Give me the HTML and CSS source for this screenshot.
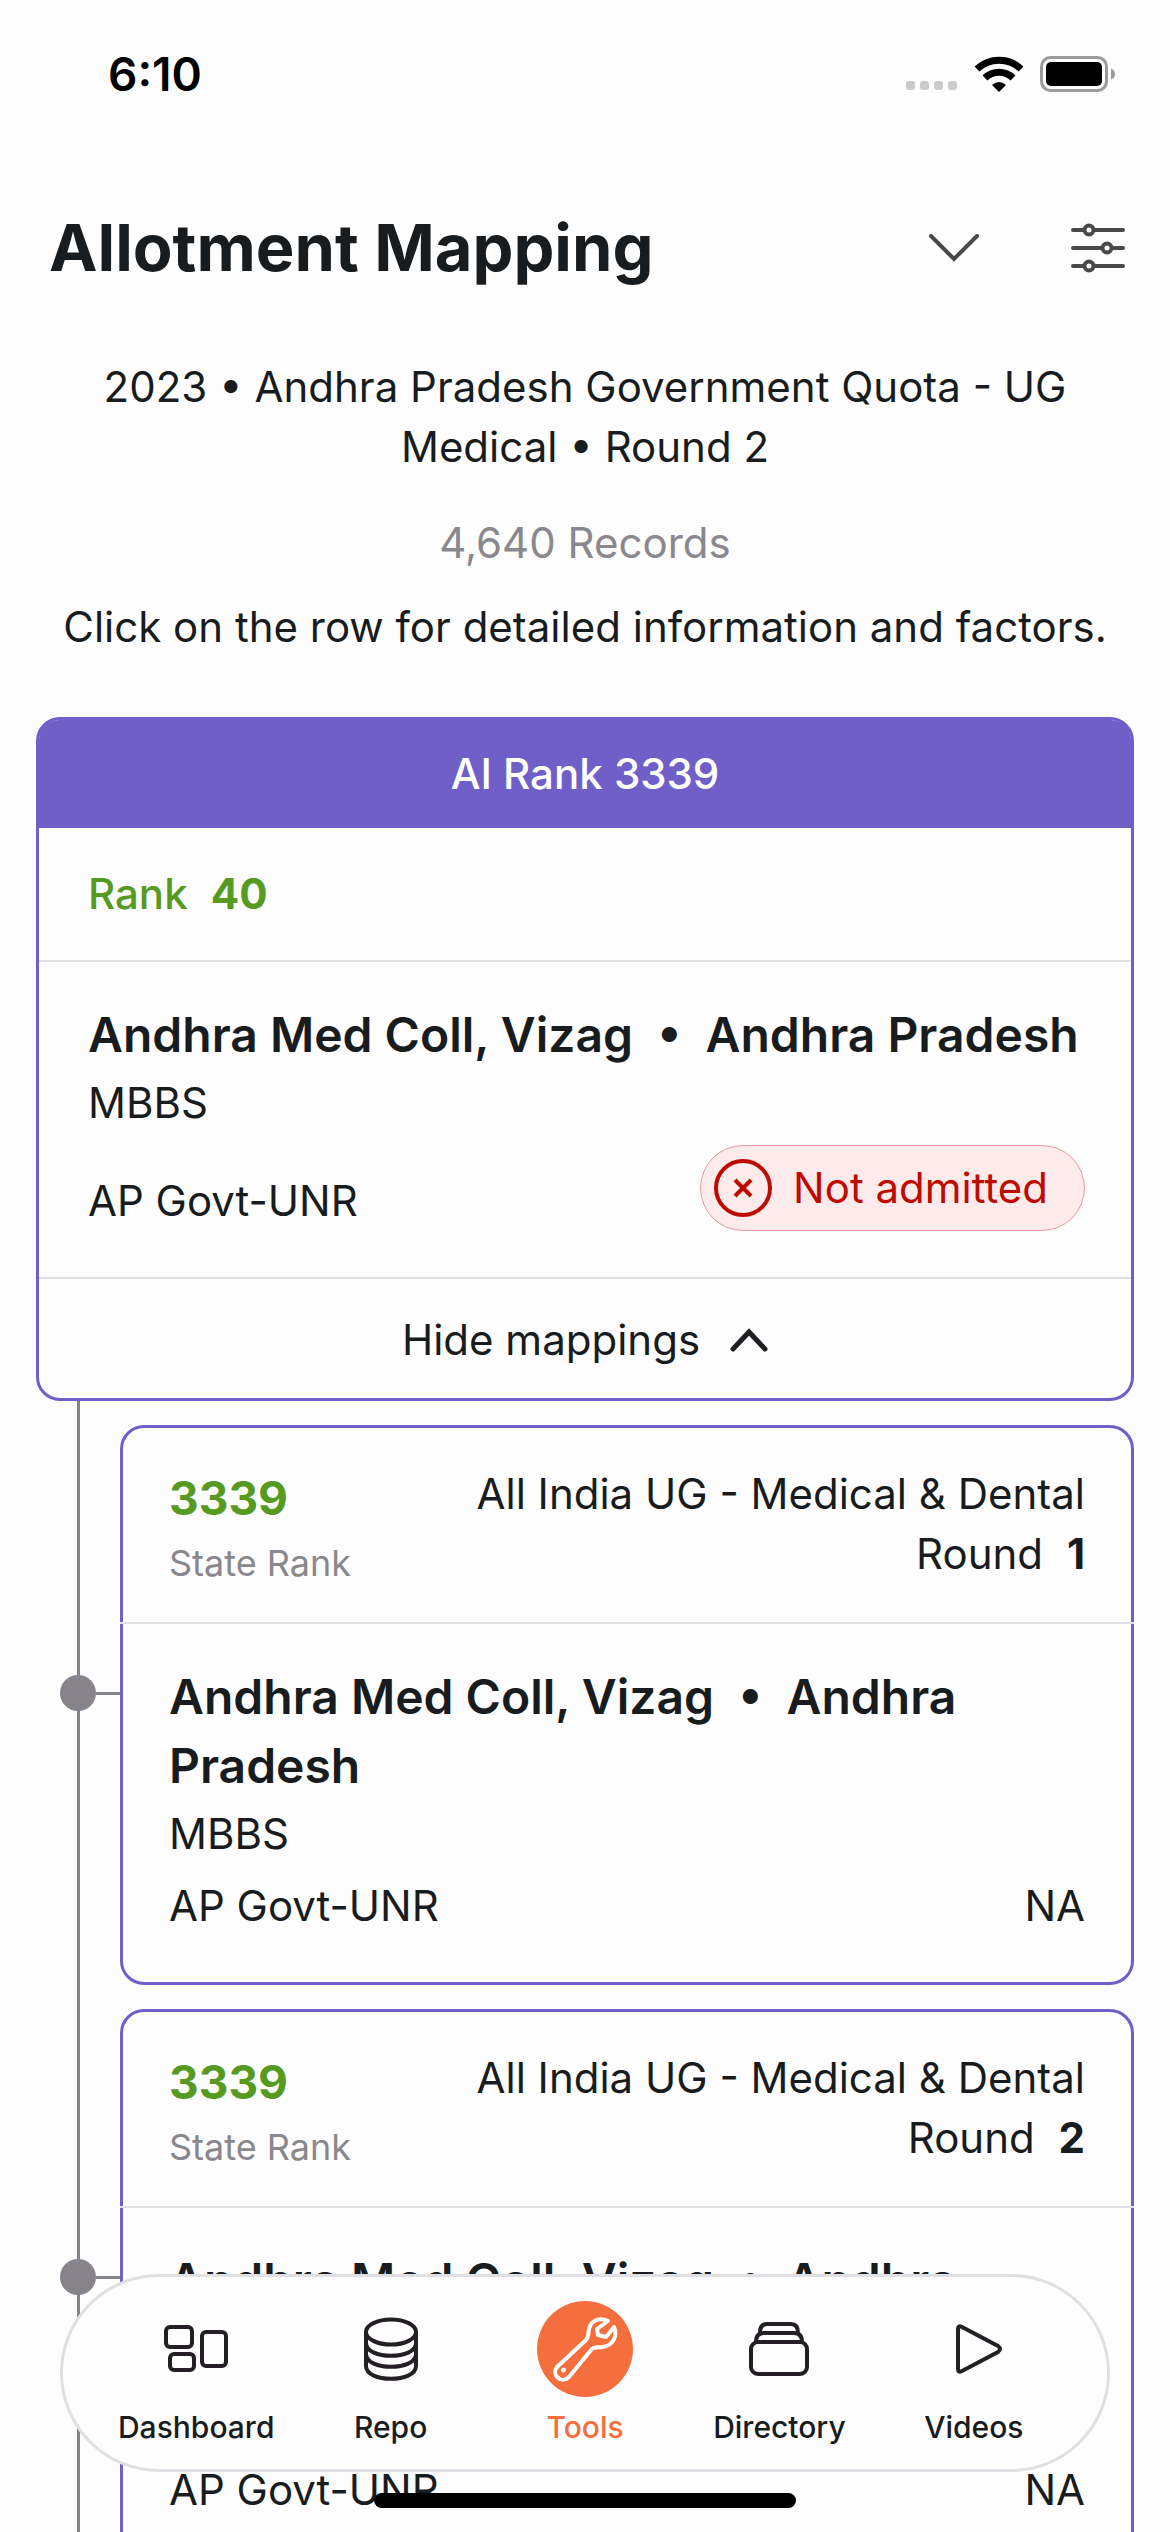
FILE: index.html
```html
<!DOCTYPE html>
<html lang="en">
<head>
    <meta charset="UTF-8">
    <meta name="viewport" content="width=device-width, initial-scale=1.0">
    <title>Allotment Mapping</title>
    <link rel="stylesheet" href="styles.css">
</head>
<body>
    <div class="screen">
        <div class="status-bar">
            <span class="time">6:10</span>
            <div class="status-icons">
                <svg width="52" height="36" viewBox="0 0 52 36" fill="#cbcacd">
                    <rect x="0" y="25" width="9" height="9" rx="3"/>
                    <rect x="14" y="25" width="9" height="9" rx="3"/>
                    <rect x="28" y="25" width="9" height="9" rx="3"/>
                    <rect x="42" y="25" width="9" height="9" rx="3"/>
                </svg>
                <svg width="50" height="36" viewBox="0 0 50 36">
                    <path d="M3 13A32 32 0 0 1 47 13" fill="none" stroke="#000" stroke-width="7"/>
                    <path d="M11 22A20 20 0 0 1 39 22" fill="none" stroke="#000" stroke-width="7"/>
                    <path d="M25 36L18 29Q25 23 32 29Z"/>
                </svg>
                <svg width="76" height="36" viewBox="0 0 76 36">
                    <rect x="1.5" y="1.5" width="65" height="33" rx="9" fill="none" stroke="#9b9a9c" stroke-width="3"/>
                    <rect x="6" y="6" width="56" height="24" rx="5"/>
                    <path d="M71 12.500q4 1.500 4 5.500t-4 5.500z" fill="#9b9a9c"/>
                </svg>
            </div>
        </div>

        <header class="header">
            <h1>Allotment Mapping</h1>
            <button class="icon-button" aria-label="Expand">
                <svg width="50" height="28" viewBox="0 0 50 28" fill="none" stroke="#47494b" stroke-width="4" stroke-linecap="round"><path d="M2 2L25 25L48 2"/></svg>
            </button>
            <button class="icon-button" aria-label="Filters">
                <svg width="54" height="50" viewBox="0 0 54 50" fill="#fdfdfd" stroke="#47494b" stroke-width="4" stroke-linecap="round">
                    <path d="M2 7H52M2 25H52M2 43H52"/>
                    <circle cx="18" cy="7" r="4.500"/>
                    <circle cx="36" cy="25" r="4.500"/>
                    <circle cx="18" cy="43" r="4.500"/>
                </svg>
            </button>
        </header>

        <main class="content">
            <p class="filters">2023 • Andhra Pradesh Government Quota - UG Medical • Round 2</p>
            <p class="records">4,640 Records</p>
            <p class="hint">Click on the row for detailed information and factors.</p>

            <section class="card">
                <h2 class="card-header">AI Rank 3339</h2>
                <div class="rank-row">Rank <strong>40</strong></div>
                <div class="card-body">
                    <h3>Andhra Med Coll, Vizag &nbsp;•&nbsp; Andhra Pradesh</h3>
                    <p class="course">MBBS</p>
                    <div class="quota-row">
                        <span>AP Govt-UNR</span>
                        <span class="badge">
                            <svg width="60" height="60" viewBox="0 0 60 60" fill="none" stroke="#be0b00" stroke-width="4">
                                <circle cx="30" cy="30" r="27"/>
                                <path d="M22 22L38 38M38 22L22 38"/>
                            </svg>
                            Not admitted
                        </span>
                    </div>
                </div>
                <button class="toggle">
                    Hide mappings
                    <svg width="38" height="24" viewBox="0 0 38 24" fill="none" stroke="#1d1f22" stroke-width="5" stroke-linecap="round"><path d="M3 21L19 4L35 21"/></svg>
                </button>
            </section>

            <div class="mappings">
                <div class="mapping">
                    <div class="rail"><span class="node"></span><span class="connector"></span></div>
                    <section class="card">
                        <div class="mapping-header">
                            <div>
                                <strong class="state-rank">3339</strong>
                                <span class="label">State Rank</span>
                            </div>
                            <div class="round">
                                <div>All India UG - Medical &amp; Dental</div>
                                <div>Round <strong>1</strong></div>
                            </div>
                        </div>
                        <div class="card-body">
                            <h3>Andhra Med Coll, Vizag &nbsp;•&nbsp; Andhra Pradesh</h3>
                            <p class="course">MBBS</p>
                            <div class="quota-row"><span>AP Govt-UNR</span><span>NA</span></div>
                        </div>
                    </section>
                </div>
                <div class="mapping">
                    <div class="rail"><span class="node"></span><span class="connector"></span></div>
                    <section class="card">
                        <div class="mapping-header">
                            <div>
                                <strong class="state-rank">3339</strong>
                                <span class="label">State Rank</span>
                            </div>
                            <div class="round">
                                <div>All India UG - Medical &amp; Dental</div>
                                <div>Round <strong>2</strong></div>
                            </div>
                        </div>
                        <div class="card-body">
                            <h3>Andhra Med Coll, Vizag &nbsp;•&nbsp; Andhra Pradesh</h3>
                            <p class="course">MBBS</p>
                            <div class="quota-row"><span>AP Govt-UNR</span><span>NA</span></div>
                        </div>
                    </section>
                </div>
            </div>
        </main>

        <nav class="tab-bar">
            <a href="#" class="tab">
                <span class="tab-icon">
                    <svg width="64" height="48" viewBox="0 0 64 48" fill="none" stroke="#231f24" stroke-width="4">
                        <rect x="2" y="2" width="26" height="20" rx="4"/>
                        <rect x="6" y="29" width="24" height="16" rx="4"/>
                        <rect x="38" y="7" width="24" height="34" rx="4"/>
                    </svg>
                </span>
                Dashboard
            </a>
            <a href="#" class="tab">
                <span class="tab-icon">
                    <svg width="54" height="64" viewBox="0 0 54 64" fill="none" stroke="#231f24" stroke-width="4">
                        <ellipse cx="27" cy="15" rx="25" ry="12.500"/>
                        <path d="M2 15V49C2 66 52 66 52 49V15M2 26C2 43 52 43 52 26M2 37C2 54 52 54 52 37"/>
                    </svg>
                </span>
                Repo
            </a>
            <a href="#" class="tab active">
                <span class="tab-icon">
                    <svg width="96" height="96" viewBox="0 0 96 96" fill="none" stroke="#fff" stroke-width="4" stroke-linecap="round" stroke-linejoin="round">
                        <path d="M71 20C63 16 54 19 52 28C51 32 52 36 49 39L21 65C13 73 24 84 32 76L54 49C57 45 61 47 66 46C76 44 81 35 77 26L69 36L61 34L60 28Z"/>
                        <circle cx="26.500" cy="69" r="2.500" fill="#fff" stroke="none"/>
                    </svg>
                </span>
                Tools
            </a>
            <a href="#" class="tab">
                <span class="tab-icon">
                    <svg width="60" height="54" viewBox="0 0 60 54" fill="none" stroke="#231f24" stroke-width="4">
                        <rect x="2" y="20" width="56" height="32" rx="7"/>
                        <path d="M7 20Q7 11 15 11H45Q53 11 53 20M11 11Q11 2 18 2H42Q49 2 49 11"/>
                    </svg>
                </span>
                Directory
            </a>
            <a href="#" class="tab">
                <span class="tab-icon">
                    <svg width="58" height="50" viewBox="-11 0 58 50" fill="none" stroke="#231f24" stroke-width="4">
                        <path d="M2 5V45Q2 49 6 47L42 28Q46 25 42 22L6 3Q2 1 2 5Z"/>
                    </svg>
                </span>
                Videos
            </a>
        </nav>
        <div class="home-indicator"></div>
    </div>
</body>
</html>
```
FILE: styles.css
```css
* {
    box-sizing: border-box;
}
body {
    margin: 0;
    font-family: Inter, "Liberation Sans", sans-serif;
    font-size: 42px;
    line-height: 60px;
    color: #191c1e;
    background-color: #fdfdfd;
}
h1, h2, h3, p {
    margin: 0;
}
button {
    font: inherit;
    color: inherit;
    background: none;
    border: none;
    padding: 0;
    cursor: pointer;
}
svg {
    display: block;
    flex-shrink: 0;
}
.screen {
    height: 100vh;
    overflow: hidden;
    position: relative;
}
.status-bar {
    display: flex;
    justify-content: space-between;
    align-items: center;
    height: 148px;
    padding: 0 54px 0 108px;
}
.time {
    font-size: 46px;
    font-weight: 600;
    color: #000;
}
.status-icons {
    display: flex;
    gap: 16px;
}
.header {
    display: flex;
    align-items: center;
    gap: 92px;
    padding: 60px 45px 69px 49px;
}
h1 {
    flex: 1;
    font-size: 65px;
    line-height: 80px;
    font-weight: 700;
}
.content {
    padding: 0 36px;
}
.filters {
    text-align: center;
    padding: 0 50px;
}
.records {
    margin-top: 36px;
    text-align: center;
    color: #8a888c;
}
.hint {
    margin: 24px 0 60px;
    text-align: center;
}
.card {
    border: 3px solid #705fc8;
    border-radius: 24px;
    background-color: #fdfdfd;
}
.card-header {
    padding: 24px;
    border-radius: 20px 20px 0 0;
    background-color: #705fc8;
    color: #fff;
    font-size: 42px;
    font-weight: 500;
    text-align: center;
}
.rank-row {
    padding: 36px 49px;
    border-bottom: 2px solid #e0e0e4;
    color: #579a22;
    font-weight: 500;
}
.rank-row strong {
    margin-left: 12px;
}
.card-body {
    padding: 38px 46px 46px 49px;
}
h3 {
    font-size: 48px;
    line-height: 69px;
    font-weight: 600;
}
.course {
    margin-top: 4px;
}
.quota-row {
    display: flex;
    justify-content: space-between;
    align-items: flex-end;
    margin-top: 12px;
}
.badge {
    display: flex;
    align-items: center;
    gap: 20px;
    padding: 12px 36px 12px 12px;
    border: 1px solid #e59aa0;
    border-radius: 43px;
    background-color: #fdeaeb;
    color: #be0b00;
}
.toggle {
    display: flex;
    justify-content: center;
    align-items: center;
    gap: 30px;
    width: 100%;
    padding: 31px 0 28px;
    border-top: 2px solid #e0e0e4;
}
.mappings {
    display: flex;
    flex-direction: column;
    gap: 24px;
    padding-top: 24px;
    background: linear-gradient(#87838b, #87838b) 41px 0 / 3px 100% no-repeat;
}
.mapping {
    display: flex;
}
.mapping .card {
    flex: 1;
}
.mapping .card-body {
    padding-left: 46px;
}
.rail {
    display: flex;
    align-items: center;
    align-self: flex-start;
    width: 84px;
    padding: 250px 0 0 24px;
}
.node {
    width: 36px;
    height: 36px;
    border-radius: 50%;
    background-color: #87838b;
}
.connector {
    flex: 1;
    height: 3px;
    background-color: #87838b;
}
.mapping-header {
    display: flex;
    justify-content: space-between;
    margin: 0 -3px;
    padding: 36px 49px 29px;
    border-bottom: 2px solid #e0e0e4;
}
.state-rank {
    display: block;
    font-size: 46px;
    line-height: 69px;
    color: #579a22;
}
.label {
    display: block;
    font-size: 36px;
    color: #8a888c;
}
.round {
    text-align: right;
}
.round strong {
    margin-left: 12px;
}
.tab-bar {
    position: absolute;
    left: 60px;
    right: 60px;
    bottom: 60px;
    display: flex;
    padding: 24px 36px 12px;
    border: 3px solid #e0e0e4;
    border-radius: 99px;
    background-color: #fdfdfd;
}
.tab {
    flex: 1;
    display: flex;
    flex-direction: column;
    align-items: center;
    font-size: 30px;
    font-weight: 500;
    color: inherit;
    text-decoration: none;
}
.tab-icon {
    display: flex;
    justify-content: center;
    align-items: center;
    width: 96px;
    height: 96px;
    border-radius: 50%;
}
.active {
    color: #f56e3d;
}
.active .tab-icon {
    background-color: #f56e3d;
}
.home-indicator {
    position: absolute;
    left: 0;
    right: 0;
    bottom: 24px;
    width: 36%;
    height: 15px;
    margin: 0 auto;
    border-radius: 8px;
    background-color: #000;
}
```
